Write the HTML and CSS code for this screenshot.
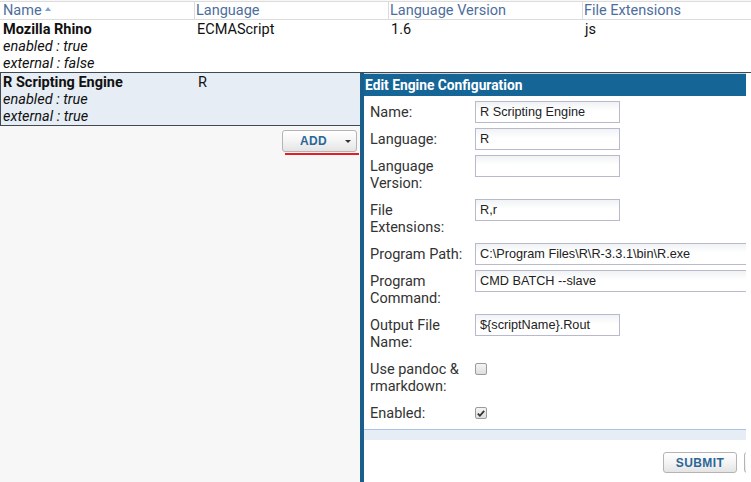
FILE: index.html
```html
<!DOCTYPE html>
<html>
<head>
<meta charset="utf-8">
<link rel="stylesheet" href="styles.css">
</head>
<body>
<div class="page">
  <div class="grid">
    <div class="row head">
      <div class="cell">Name<span class="sort"></span></div>
      <div class="cell">Language</div>
      <div class="cell">Language Version</div>
      <div class="cell">File Extensions</div>
    </div>
    <div class="row item">
      <div class="cell"><b>Mozilla Rhino</b><i>enabled : true</i><i>external : false</i></div>
      <div class="cell">ECMAScript</div>
      <div class="cell">1.6</div>
      <div class="cell">js</div>
    </div>
    <div class="row item selected">
      <div class="cell"><b>R Scripting Engine</b><i>enabled : true</i><i>external : true</i></div>
      <div class="cell">R</div>
      <div class="cell"></div>
      <div class="cell"></div>
    </div>
  </div>
  <div class="toolbar">
    <div class="add-wrap">
      <button class="btn add">ADD<span class="caret"></span></button>
      <div class="redline"></div>
    </div>
  </div>

  <div class="dialog">
    <div class="panel">
      <div class="title">Edit Engine Configuration</div>
      <div class="form">
        <label class="lbl">Name:</label>
        <div class="fld"><span class="inp short">R Scripting Engine</span></div>
        <label class="lbl">Language:</label>
        <div class="fld"><span class="inp short">R</span></div>
        <label class="lbl">Language<br>Version:</label>
        <div class="fld"><span class="inp short"></span></div>
        <label class="lbl">File<br>Extensions:</label>
        <div class="fld"><span class="inp short">R,r</span></div>
        <label class="lbl">Program Path:</label>
        <div class="fld"><span class="inp long">C:\Program Files\R\R-3.3.1\bin\R.exe</span></div>
        <label class="lbl">Program<br>Command:</label>
        <div class="fld"><span class="inp long">CMD BATCH --slave</span></div>
        <label class="lbl">Output File<br>Name:</label>
        <div class="fld"><span class="inp short">${scriptName}.Rout</span></div>
        <label class="lbl">Use pandoc &amp;<br>rmarkdown:</label>
        <div class="fld"><span class="cb"></span></div>
        <label class="lbl">Enabled:</label>
        <div class="fld"><span class="cb"><svg width="11" height="11" viewBox="0 0 11 11"><path d="M2 5.6 L4.3 8 L9 2.6" fill="none" stroke="#333" stroke-width="2"/></svg></span></div>
      </div>
      <div class="band"></div>
      <div class="actions">
        <button class="btn submit">SUBMIT</button>
        <button class="btn submit" aria-label="Cancel"></button>
      </div>
    </div>
  </div>
</div>
</body>
</html>
```

FILE: styles.css
```css
html, body {
  margin: 0;
  padding: 0;
}
body {
  font-family: Roboto, "Liberation Sans", sans-serif;
  font-size: 14.5px;
  color: #222;
  background: #f7f7f7;
}
.page {
  position: relative;
  width: 751px;
  height: 482px;
  overflow: hidden;
}
.grid {
  background: #fff;
  padding-top: 1px;
  background-clip: content-box;
}
.row {
  display: grid;
  grid-template-columns: 194px 194px 194px 1fr;
  line-height: 17px;
}
.head {
  border-top: 1px solid #dcdcdc;
  border-bottom: 1px solid #dcdcdc;
  color: #4d6e9c;
  background: #fff;
}
.head .cell {
  padding-left: 1px;
  border-left: 1px solid #dcdcdc;
}
.head .cell:first-child {
  padding-left: 3px;
  border-left: none;
}
.sort {
  display: inline-block;
  width: 0;
  height: 0;
  margin-left: 3px;
  border-left: 3.5px solid transparent;
  border-right: 3.5px solid transparent;
  border-bottom: 4px solid #7ba2d4;
  vertical-align: 4px;
}
.item {
  background: #fff;
  padding-top: 1px;
}
.item .cell {
  padding-left: 3px;
  color: #111;
}
.item .cell:first-child {
  display: flex;
  flex-direction: column;
}
.item b {
  font-weight: 700;
}
.item i {
  font-style: italic;
}
.selected {
  background: #e6edf5;
  padding-top: 1px;
  border-top: 1px solid #3f4a55;
  border-bottom: 1px solid #3f4a55;
  border-left: 1px solid #3f4a55;
}
.selected .cell:first-child {
  padding-left: 2px;
}
.toolbar {
  width: 360px;
  display: flex;
  justify-content: flex-end;
  padding-top: 4px;
  box-sizing: border-box;
  padding-right: 3px;
}
.add-wrap {
  display: flex;
  flex-direction: column;
  align-items: flex-end;
}
.btn {
  font-family: "Liberation Sans", Arial, sans-serif;
  font-weight: 700;
  font-size: 12px;
  color: #2b6697;
  border: 1px solid #b4b4b4;
  border-radius: 3px;
  background: linear-gradient(#ffffff, #f4f4f4 50%, #e4e4e4);
  padding: 0;
  margin: 0;
  flex-shrink: 0;
}
.add {
  width: 75px;
  height: 22px;
  position: relative;
  padding-right: 12px;
  letter-spacing: 0.3px;
}
.caret {
  position: absolute;
  right: 5px;
  top: 9px;
  width: 0;
  height: 0;
  border-left: 3px solid transparent;
  border-right: 3px solid transparent;
  border-top: 3px solid #333;
}
.redline {
  width: 74px;
  height: 2px;
  margin-top: 1px;
  margin-right: -2px;
  background: #e31e24;
}
.dialog {
  position: absolute;
  left: 360px;
  top: 73px;
  right: 0;
  bottom: 0;
  background: #fff;
}
.panel {
  width: 386px;
  height: 100%;
  box-sizing: border-box;
  border-left: 4px solid #1a5e8c;
  overflow: hidden;
  display: flex;
  flex-direction: column;
}
.title {
  flex-shrink: 0;
  height: 22px;
  line-height: 22px;
  border-top: 1px solid #c8d2dc;
  background: #166597;
  color: #fff;
  font-weight: 700;
  font-size: 13.8px;
  padding-left: 1px;
  white-space: nowrap;
}
.form {
  display: grid;
  grid-template-columns: 105px 1fr;
  row-gap: 3px;
  padding: 5px 0 3px 6px;
  border-bottom: 1px solid #a8c4e6;
}
.lbl {
  padding: 3px 0 4px;
  line-height: 17px;
  color: #333;
}
.fld {
  display: flex;
  align-items: flex-start;
  min-width: 0;
}
.inp {
  box-sizing: border-box;
  height: 22px;
  line-height: 20px;
  border: 1px solid #b8b9cc;
  background: linear-gradient(#f0f2f4, #ffffff 45%);
  font-family: "Liberation Sans", Arial, sans-serif;
  font-size: 12.7px;
  color: #222;
  padding-left: 4px;
  white-space: nowrap;
  flex-shrink: 0;
}
.short {
  width: 145px;
}
.long {
  width: 300px;
}
.cb {
  box-sizing: border-box;
  width: 12px;
  height: 12px;
  margin-top: 5px;
  border: 1px solid #9b9b9b;
  border-radius: 2px;
  background: linear-gradient(#f4f4f4, #dedede);
  display: flex;
  align-items: center;
  justify-content: center;
}
.band {
  flex-shrink: 0;
  height: 10px;
  background: #e6edf5;
}
.actions {
  display: flex;
  gap: 7px;
  padding: 12px 0 0 299px;
}
.submit {
  width: 74px;
  height: 21px;
  letter-spacing: 0.4px;
}
```
